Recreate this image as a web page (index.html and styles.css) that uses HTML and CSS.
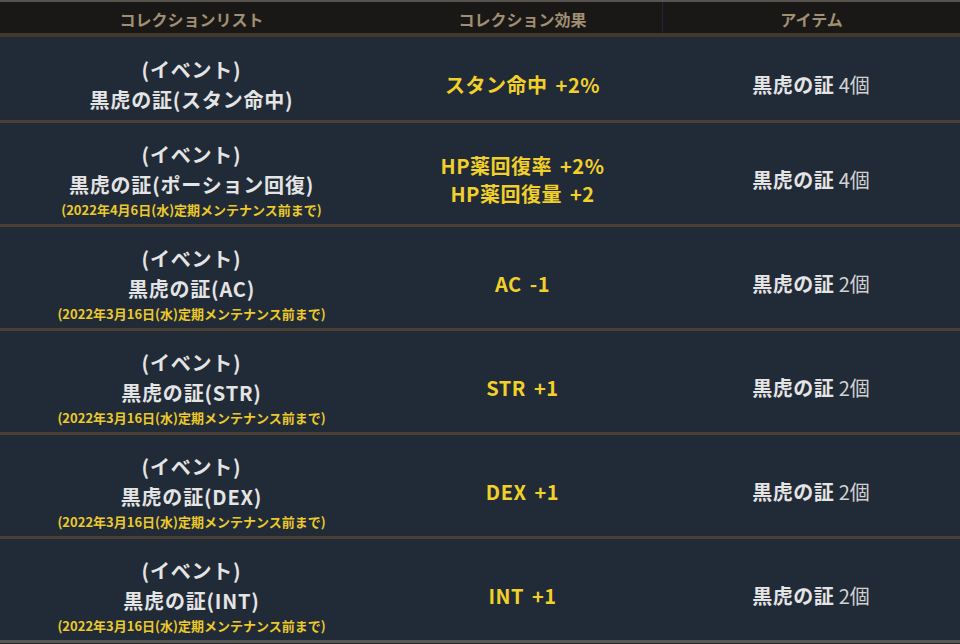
FILE: index.html
```html
<!DOCTYPE html>
<html lang="ja">
<head>
<meta charset="utf-8">
<link rel="stylesheet" href="styles.css">
</head>
<body>
<div class="table">
  <div class="head">
    <div class="hcell">コレクションリスト</div>
    <div class="hcell">コレクション効果</div>
    <div class="hcell hlast">アイテム</div>
  </div>

  <div class="row first">
    <div class="name"><div class="big">(イベント)</div><div class="big">黒虎の証(スタン命中)</div></div>
    <div class="effect"><div>スタン命中&nbsp;+2%</div></div>
    <div class="item"><b>黒虎の証</b> <span>4個</span></div>
  </div>

  <div class="row">
    <div class="name"><div class="big">(イベント)</div><div class="big">黒虎の証(ポーション回復)</div><div class="small">(2022年4月6日(水)定期メンテナンス前まで)</div></div>
    <div class="effect"><div>HP薬回復率&nbsp;+2%</div><div>HP薬回復量&nbsp;+2</div></div>
    <div class="item"><b>黒虎の証</b> <span>4個</span></div>
  </div>

  <div class="row">
    <div class="name"><div class="big">(イベント)</div><div class="big">黒虎の証(AC)</div><div class="small">(2022年3月16日(水)定期メンテナンス前まで)</div></div>
    <div class="effect"><div>AC&nbsp;-1</div></div>
    <div class="item"><b>黒虎の証</b> <span>2個</span></div>
  </div>

  <div class="row">
    <div class="name"><div class="big">(イベント)</div><div class="big">黒虎の証(STR)</div><div class="small">(2022年3月16日(水)定期メンテナンス前まで)</div></div>
    <div class="effect"><div>STR&nbsp;+1</div></div>
    <div class="item"><b>黒虎の証</b> <span>2個</span></div>
  </div>

  <div class="row">
    <div class="name"><div class="big">(イベント)</div><div class="big">黒虎の証(DEX)</div><div class="small">(2022年3月16日(水)定期メンテナンス前まで)</div></div>
    <div class="effect"><div>DEX&nbsp;+1</div></div>
    <div class="item"><b>黒虎の証</b> <span>2個</span></div>
  </div>

  <div class="row last">
    <div class="name"><div class="big">(イベント)</div><div class="big">黒虎の証(INT)</div><div class="small">(2022年3月16日(水)定期メンテナンス前まで)</div></div>
    <div class="effect"><div>INT&nbsp;+1</div></div>
    <div class="item"><b>黒虎の証</b> <span>2個</span></div>
  </div>
</div>
</body>
</html>
```
FILE: styles.css
```css
html, body {
  margin: 0;
  padding: 0;
  background: #212b38;
}
body {
  font-family: "Noto Sans CJK JP", "Noto Sans", sans-serif;
  width: 960px;
  height: 644px;
  overflow: hidden;
}
.table {
  width: 960px;
}
.head {
  display: grid;
  grid-template-columns: 383px 279px 298px;
  background: #1a1817;
  border-top: 2px solid #57534e;
  border-bottom: 4px solid #43382d;
  height: 31px;
}
.hcell {
  display: flex;
  align-items: center;
  justify-content: center;
  color: #a08f72;
  font-size: 16px;
  font-weight: 700;
  line-height: 20px;
  padding-top: 2px;
}
.hlast {
  border-left: 1px solid #1f2838;
}
.row {
  display: grid;
  grid-template-columns: 383px 279px 298px;
  background: #212b38;
  border-bottom: 3px solid #4b3f33;
  padding: 17px 0 5px;
}
.row.first {
  padding-top: 18px;
}
.row.last {
  border-bottom-color: #5a574f;
}
.name, .effect, .item {
  display: flex;
  flex-direction: column;
  align-items: center;
  justify-content: center;
  text-align: center;
}
.big {
  color: #e4e4e4;
  font-size: 20px;
  font-weight: 700;
  line-height: 30px;
  letter-spacing: 0.8px;
}
.small {
  color: #ecc92a;
  font-size: 13px;
  font-weight: 700;
  line-height: 19px;
}
.effect {
  color: #f2d02a;
  font-size: 20px;
  font-weight: 700;
  line-height: 28px;
  letter-spacing: 0.5px;
  word-spacing: 3px;
}
.item {
  display: block;
  align-self: center;
  color: #e4e4e4;
  font-size: 20px;
  line-height: 28px;
}
.item b {
  font-weight: 700;
  letter-spacing: 0.5px;
}
.item span {
  font-weight: 400;
  color: #d2d2d2;
}
```
